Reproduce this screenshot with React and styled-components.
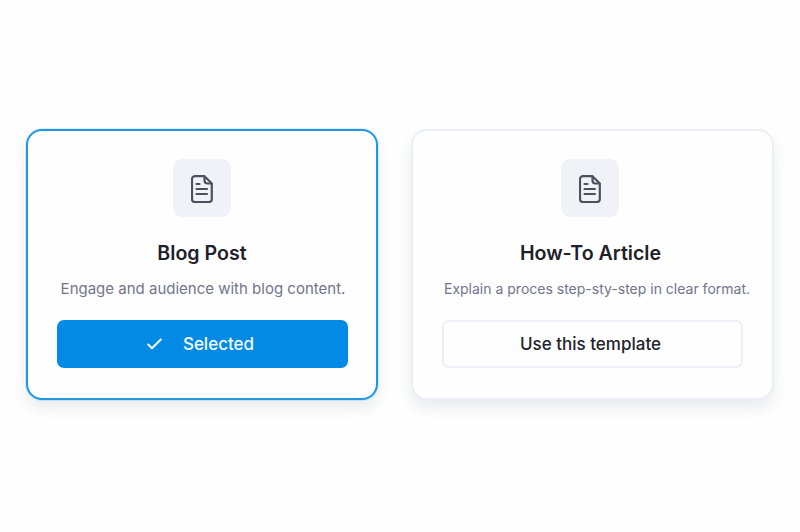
import React from "react";
import styled, { createGlobalStyle } from "styled-components";

const GlobalStyle = createGlobalStyle`
  html, body {
    margin: 0;
    padding: 0;
    background: #fefefe;
    font-family: "Inter", "Liberation Sans", sans-serif;
  }
`;

const Page = styled.div`
  width: 800px;
  height: 532px;
  box-sizing: border-box;
  padding: 129px 26px 0 26px;
  display: flex;
  align-items: flex-start;
  gap: 33px;
  overflow: hidden;
`;

const Card = styled.div`
  width: ${(p) => p.$width}px;
  height: 271px;
  box-sizing: border-box;
  flex: none;
  display: flex;
  flex-direction: column;
  align-items: center;
  padding-top: 28px;
  background: #fefefe;
  border-radius: 16px;
  border: ${(p) => (p.$selected ? "2px solid #2197e3" : "2px solid #eceef6")};
  box-shadow: ${(p) => (p.$selected ? "0 0 0 1px rgba(33, 151, 227, 0.15)," : "")} 0 8px 14px rgba(60, 66, 100, 0.1);
`;

const IconTile = styled.div`
  width: 58px;
  height: 58px;
  box-sizing: border-box;
  padding-top: 2px;
  margin-right: ${(p) => p.$nudge || 0}px;
  border-radius: 9px;
  background: #f1f2f8;
  display: flex;
  align-items: center;
  justify-content: center;
  color: #4f4f5e;
`;

const Title = styled.h2`
  margin: 24px 0 0;
  margin-right: ${(p) => p.$nudge || 0}px;
  font-size: 19.6px;
  line-height: 24px;
  font-weight: 600;
  color: #1f2028;
`;

const Description = styled.p`
  margin: 14px 0 0;
  margin-left: ${(p) => p.$nudge || 0}px;
  font-size: ${(p) => p.$size}px;
  line-height: 20px;
  font-weight: 400;
  color: #72748a;
  white-space: nowrap;
`;

const Button = styled.button`
  width: ${(p) => p.$width}px;
  height: 48px;
  margin-top: 21px;
  box-sizing: border-box;
  display: flex;
  align-items: center;
  justify-content: center;
  gap: 21px;
  padding: 0 ${(p) => (p.$selected ? "3px" : "4px")} 0 0;
  border-radius: 7px;
  font-family: inherit;
  font-size: 17px;
  font-weight: 500;
  border: ${(p) => (p.$selected ? "none" : "2px solid #eeeff6")};
  background: ${(p) => (p.$selected ? "#038ae5" : "#fefefe")};
  color: ${(p) => (p.$selected ? "#f4faff" : "#22232b")};
`;

const DocIcon = () => (
  <svg width="22" height="28" viewBox="0 0 22 28" fill="none" stroke="currentColor" strokeWidth="2.2" strokeLinecap="round" strokeLinejoin="round">
    <path d="M4 1.200H13.500L20.800 8.500V24a3 3 0 0 1-3 3H4a3 3 0 0 1-3-3V4.200a3 3 0 0 1 3-3z" />
    <path d="M13.500 1.500V5.500a3 3 0 0 0 3 3H20.500" />
    <path d="M5.500 9H8.500M5.500 14H16M5.500 19H16" />
  </svg>
);

const CheckIcon = () => (
  <svg width="15" height="12" viewBox="0 0 15 12" fill="none" stroke="currentColor" strokeWidth="2" strokeLinecap="round" strokeLinejoin="round">
    <path d="M1.200 6.500L5 10.300L13.800 1.500" />
  </svg>
);

export default function App() {
  return (
    <>
      <GlobalStyle />
      <Page>
        <Card $width={352} $selected>
          <IconTile>
            <DocIcon />
          </IconTile>
          <Title>Blog Post</Title>
          <Description $size={15} $nudge={2}>Engage and audience with blog content.</Description>
          <Button $width={291} $selected>
            <CheckIcon />
            Selected
          </Button>
        </Card>
        <Card $width={363}>
          <IconTile $nudge={5}>
            <DocIcon />
          </IconTile>
          <Title $nudge={4}>How-To Article</Title>
          <Description $size={14} $nudge={9}>Explain a proces step-sty-step in clear format.</Description>
          <Button $width={301}>Use this template</Button>
        </Card>
      </Page>
    </>
  );
}
